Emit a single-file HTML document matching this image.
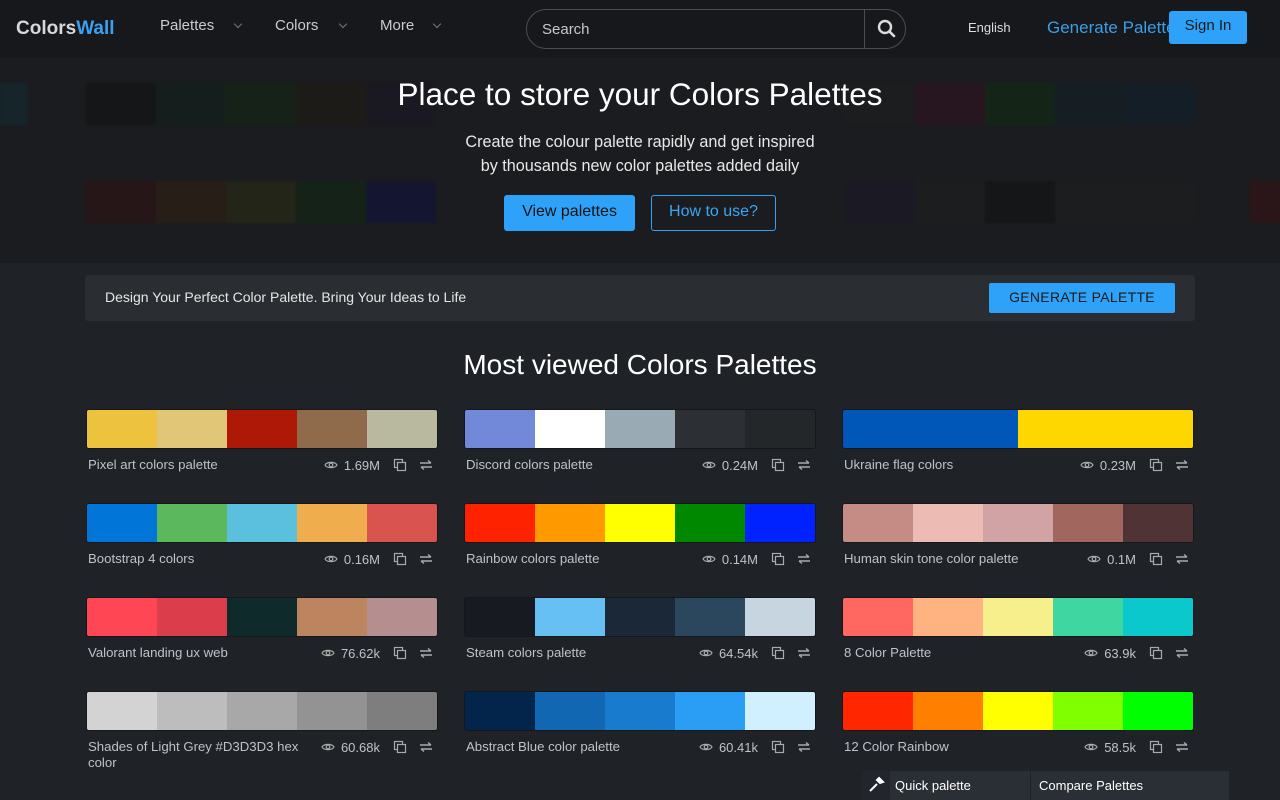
<!DOCTYPE html>
<html><head><meta charset="utf-8"><style>
*{box-sizing:border-box;margin:0;padding:0}
body{width:1280px;height:800px;overflow:hidden;background:#1f2227;font-family:"Liberation Sans",sans-serif;color:#ddd;position:relative}
.hdr{position:absolute;left:0;top:0;width:1280px;height:58px;background:#16181b}
.logo{position:absolute;left:16px;top:18px;font-size:19px;font-weight:bold;color:#d5d8dc}
.logo span{color:#3ca0f0}
.nav{position:absolute;top:17px;font-size:15px;color:#c9ccd0}
.chev{position:absolute;top:21px;width:6px;height:6px;border-right:1px solid #777;border-bottom:1px solid #777;transform:rotate(45deg)}
.search{position:absolute;left:526px;top:9px;width:380px;height:40px;border:1px solid #4a4d52;border-radius:20px}
.search .t{position:absolute;left:15px;top:11px;font-size:15px;color:#c8c8c8}
.search .div{position:absolute;left:337px;top:0;width:1px;height:38px;background:#4a4d52}
.hero{position:absolute;left:0;top:58px;width:1280px;height:205px;background:#1a1c1f;overflow:hidden}
.blur{position:absolute;height:42px;opacity:.2;filter:blur(1px)}
.h1{position:absolute;left:0;width:1280px;text-align:center;top:76px;font-size:31.5px;color:#fff}
.sub{position:absolute;left:0;width:1280px;text-align:center;top:130px;font-size:16.2px;line-height:24px;color:#e8e8e8}
.btn1{position:absolute;left:504px;top:195px;width:131px;height:36px;background:#2ea2f8;border-radius:3px;color:#111;font-size:16px;text-align:center;line-height:34px}
.btn2{position:absolute;left:651px;top:195px;width:125px;height:36px;border:1px solid #2ea2f8;border-radius:3px;color:#3aa6f5;font-size:16px;text-align:center;line-height:32px}
.banner{position:absolute;left:85px;top:275px;width:1110px;height:46px;background:#2a2d32;border-radius:3px}
.banner .t{position:absolute;left:20px;top:14px;font-size:14px;color:#e6e6e6}
.banner .b{position:absolute;left:904px;top:8px;width:186px;height:30px;background:#2ea2f8;border-radius:2px;color:#1a1a1a;font-size:14px;text-align:center;line-height:28px;letter-spacing:.3px}
.h2{position:absolute;left:0;width:1280px;text-align:center;top:349px;font-size:28px;color:#fff}
.card{position:absolute;width:352px}
.sw{display:flex;height:40px;border-radius:3px;overflow:hidden;border:1px solid #15171a}
.sw div{flex:1}
.lbl{position:absolute;left:2px;top:48px;font-size:13.2px;color:#bfc3c8;width:220px;line-height:16px}
.meta{position:absolute;right:5px;top:48px;font-size:13px;color:#bfc3c8;display:flex;align-items:center;gap:6px;height:16px}
.meta svg{display:block}
.qp{position:absolute;left:862px;top:771px;width:168px;height:29px;background:#2a2e35}
.cp{position:absolute;left:1031px;top:771px;width:198px;height:29px;background:#2a2e35}
</style></head><body>
<div class="hdr">
<div class="logo">Colors<span>Wall</span></div>
<div class="nav" style="left:160px">Palettes</div><div class="chev" style="left:235px"></div>
<div class="nav" style="left:275px">Colors</div><div class="chev" style="left:340px"></div>
<div class="nav" style="left:380px">More</div><div class="chev" style="left:434px"></div>
<div class="search"><div class="t">Search</div><div class="div"></div>
<svg style="position:absolute;left:350px;top:9px" width="20" height="20" viewBox="0 0 20 20"><circle cx="8" cy="8" r="6" fill="none" stroke="#ddd" stroke-width="2.4"/><line x1="12.5" y1="12.5" x2="17" y2="17" stroke="#ddd" stroke-width="2.6" stroke-linecap="round"/></svg></div>
<div style="position:absolute;left:968px;top:20px;font-size:13px;color:#ddd">English</div>
<div style="position:absolute;left:1047px;top:18px;font-size:17px;color:#3a9ee8">Generate Palette</div>
<div style="position:absolute;left:1169px;top:11px;width:78px;height:33px;background:#2ea2f8;border-radius:3px;color:#1a1a1a;font-size:15px;text-align:center;line-height:30px">Sign In</div>
</div>
<div class="hero">
<div class="blur" style="left:0;top:25px;width:28px;background:#0a4a5a"></div>
<div class="blur" style="left:86px;top:25px;width:350px;background:linear-gradient(90deg,#000 0 20%,#0a2a1a 20% 40%,#0a3a00 40% 60%,#2a1a00 60% 80%,#1a0a2a 80%)"></div>
<div class="blur" style="left:845px;top:25px;width:350px;background:linear-gradient(90deg,#222 0 20%,#5a0020 20% 40%,#004a00 40% 60%,#0a2a3a 60% 80%,#002a4a 80%)"></div>
<div class="blur" style="left:86px;top:123px;width:350px;background:linear-gradient(90deg,#5a0000 0 20%,#5a2a00 20% 40%,#4a4a00 40% 60%,#003a00 60% 80%,#00007a 80%)"></div>
<div class="blur" style="left:845px;top:123px;width:350px;background:linear-gradient(90deg,#1a103a 0 20%,#222 20% 40%,#000 40% 60%,#222 60%)"></div>
<div class="blur" style="left:1250px;top:123px;width:30px;background:#6a0000"></div>
</div>
<div class="h1">Place to store your Colors Palettes</div>
<div class="sub">Create the colour palette rapidly and get inspired<br>by thousands new color palettes added daily</div>
<div class="btn1">View palettes</div>
<div class="btn2">How to use?</div>
<div class="banner"><div class="t">Design Your Perfect Color Palette. Bring Your Ideas to Life</div><div class="b">GENERATE PALETTE</div></div>
<div class="h2">Most viewed Colors Palettes</div>

<div id="cards"></div>
<script>
var eye='<svg width="14" height="10" viewBox="0 0 14 10"><path d="M1 5C3 1.5 11 1.5 13 5C11 8.5 3 8.5 1 5Z" fill="none" stroke="#aaa" stroke-width="1.2"/><circle cx="7" cy="5" r="1.8" fill="none" stroke="#aaa" stroke-width="1.2"/></svg>';
var cp='<svg width="14" height="14" viewBox="0 0 14 14" style="margin-left:7px"><rect x="1.5" y="1.5" width="8" height="8" fill="none" stroke="#aaa" stroke-width="1.2"/><rect x="4.5" y="4.5" width="8" height="8" fill="#1f2227" stroke="#aaa" stroke-width="1.2"/></svg>';
var sw='<svg width="14" height="12" viewBox="0 0 14 12" style="margin-left:6px"><path d="M1 4H12M9 1.5L12 4M13 8H2M5 10.5L2 8" fill="none" stroke="#aaa" stroke-width="1.4"/></svg>';
var d=[
["Pixel art colors palette","1.69M",["#edc23c","#e1c677","#ad1906","#8f6b4b","#b9b99f"]],
["Discord colors palette","0.24M",["#7289da","#ffffff","#99aab5","#2c2f33","#23272a"]],
["Ukraine flag colors","0.23M",["#0057b8","#ffd700"]],
["Bootstrap 4 colors","0.16M",["#0275d8","#5cb85c","#5bc0de","#f0ad4e","#d9534f"]],
["Rainbow colors palette","0.14M",["#ff2200","#ff9900","#ffff00","#008800","#0022ff"]],
["Human skin tone color palette","0.1M",["#c58c85","#ecbcb4","#d1a3a4","#a1665e","#503335"]],
["Valorant landing ux web","76.62k",["#ff4655","#dc3d4b","#0f2a2a","#bd8460","#b58f8f"]],
["Steam colors palette","64.54k",["#171a21","#66c0f4","#1b2838","#2a475e","#c7d5e0"]],
["8 Color Palette","63.9k",["#ff6860","#ffb380","#f6ef8c","#40d6a2","#0bc8cd"]],
["Shades of Light Grey #D3D3D3 hex color","60.68k",["#d3d3d3","#bdbdbd","#a8a8a8","#939393","#7e7e7e"]],
["Abstract Blue color palette","60.41k",["#03254c","#1167b1","#187bcd","#2a9df4","#d0efff"]],
["12 Color Rainbow","58.5k",["#ff2600","#ff7f00","#ffff00","#80ff00","#00ff00"]]];
var h='',xs=[86,464,842],ys=[409,503,597,691];
d.forEach(function(c,i){h+='<div class="card" style="left:'+xs[i%3]+'px;top:'+ys[Math.floor(i/3)]+'px"><div class="sw">'+c[2].map(function(x){return '<div style="background:'+x+'"></div>'}).join('')+'</div><div class="lbl">'+c[0]+'</div><div class="meta">'+eye+'<span>'+c[1]+'</span>'+cp+sw+'</div></div>'});
document.getElementById('cards').innerHTML=h;
</script>
<div class="qp"><div style="position:absolute;left:0;top:0;width:28px;height:29px;background:#22252b"></div>
<svg style="position:absolute;left:5px;top:5px" width="18" height="18" viewBox="0 0 18 18"><path d="M3 15L10 8M12 2l4 4-3 1-3-3z" stroke="#fff" stroke-width="2" fill="#fff"/></svg>
<div style="position:absolute;left:33px;top:7px;font-size:13px;color:#fff">Quick palette</div></div>
<div class="cp"><div style="position:absolute;left:8px;top:7px;font-size:13px;color:#fff">Compare Palettes</div></div>
</body></html>
